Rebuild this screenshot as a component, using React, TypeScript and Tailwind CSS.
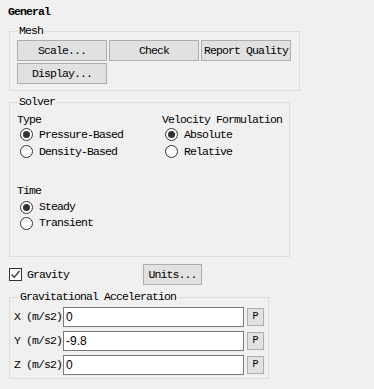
import React from "react";

const Btn = ({ label, w = "w-[90px]" }: { label: string; w?: string }) => (
  <button
    className={`${w} h-[21px] bg-[#e1e1e1] border border-[#adadad] flex items-center justify-center leading-none`}
  >
    {label}
  </button>
);

const Radio = ({ label, checked }: { label: string; checked?: boolean }) => (
  <div className="flex items-center h-full gap-[6px]">
    <span className="w-[13px] h-[13px] rounded-full border border-[#333] bg-white flex items-center justify-center">
      {checked && <span className="w-[7px] h-[7px] rounded-full bg-[#333]" />}
    </span>
    <span>{label}</span>
  </div>
);

const Row = ({ axis, value }: { axis: string; value: string }) => (
  <div className="flex items-center h-[20px]">
    <span className="w-[49px]">{axis} (m/s2)</span>
    <div className="w-[181px] h-[20px] bg-white border border-[#7a7a7a] flex items-center pl-[2px] font-['Liberation_Sans',sans-serif] text-[12px] tracking-normal">
      {value}
    </div>
    <button className="ml-[3px] w-[17px] h-[18px] bg-[#e1e1e1] border border-[#adadad] flex items-center justify-center text-[10px] tracking-normal leading-none">
      P
    </button>
  </div>
);

export default function App() {
  return (
    <div className="w-[374px] h-[389px] bg-[#f0f0f0] text-black font-['Liberation_Mono',monospace] text-[11.5px] tracking-[-0.9px] leading-[14px] pl-[9px] pt-[5px] overflow-hidden">
      <div className="h-[14px] font-bold -ml-px">General</div>

      <fieldset className="mt-[5px] w-[291px] border border-[#dcdcdc] pl-[7px] pr-0 pt-[2px] pb-[6px]">
        <legend className="px-[2px] h-[14px]">Mesh</legend>
        <div className="flex flex-col gap-[2px]">
          <div className="flex gap-[2px]">
            <Btn label="Scale..." />
            <Btn label="Check" />
            <Btn label="Report Quality" />
          </div>
          <div className="flex">
            <Btn label="Display..." />
          </div>
        </div>
      </fieldset>

      <fieldset className="mt-[4px] w-[281px] h-[162px] border border-[#dcdcdc] pl-[7px] pt-[4px]">
        <legend className="px-[2px] h-[14px]">Solver</legend>
        <div className="flex">
          <div className="w-[145px]">
            <div className="h-[13px]">Type</div>
            <div className="pl-[3px]">
              <div className="h-[17px]"><Radio label="Pressure-Based" checked /></div>
              <div className="h-[17px]"><Radio label="Density-Based" /></div>
            </div>
            <div className="h-[15px] mt-[24px]">Time</div>
            <div className="pl-[3px]">
              <div className="h-[16px]"><Radio label="Steady" checked /></div>
              <div className="h-[16px]"><Radio label="Transient" /></div>
            </div>
          </div>
          <div>
            <div className="h-[13px]">Velocity Formulation</div>
            <div className="pl-[3px]">
              <div className="h-[17px]"><Radio label="Absolute" checked /></div>
              <div className="h-[17px]"><Radio label="Relative" /></div>
            </div>
          </div>
        </div>
      </fieldset>

      <div className="mt-[7px] flex items-center h-[21px]">
        <div className="w-[134px] flex items-center gap-[5px]">
          <span className="w-[13px] h-[13px] border border-[#333] bg-white flex items-center justify-center">
            <svg width="11" height="11" viewBox="0 0 11 11">
              <path d="M1.5 5.5 L4.2 8.3 L9.5 2" fill="none" stroke="#333" strokeWidth="1.3" />
            </svg>
          </span>
          <span>Gravity</span>
        </div>
        <Btn label="Units..." w="w-[59px]" />
      </div>

      <fieldset className="mt-[5px] w-[260px] border border-[#dcdcdc] pl-[4px] pt-[3px] pb-[3px]">
        <legend className="ml-[4px] px-[2px] h-[14px]">Gravitational Acceleration</legend>
        <div className="flex flex-col gap-[4px]">
          <Row axis="X" value="0" />
          <Row axis="Y" value="-9.8" />
          <Row axis="Z" value="0" />
        </div>
      </fieldset>
    </div>
  );
}
